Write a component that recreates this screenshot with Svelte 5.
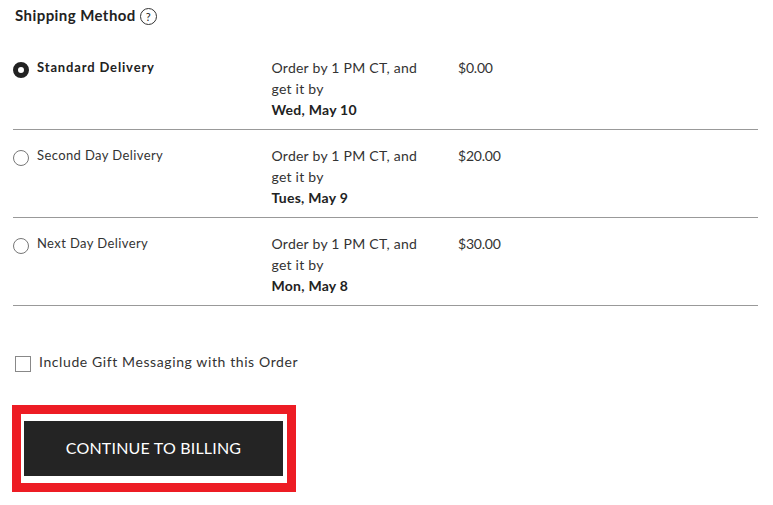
<script>
const methods = [
  { name: 'Standard Delivery', date: 'Wed, May 10', price: '$0.00', selected: true },
  { name: 'Second Day Delivery', date: 'Tues, May 9', price: '$20.00' },
  { name: 'Next Day Delivery', date: 'Mon, May 8', price: '$30.00' }
];
</script>

<div class="page">
  <h2 class="title">
    Shipping Method
    <span class="help">?</span>
  </h2>

  <div class="methods">
    {#each methods as m}
      <div class="method">
        <span class="radio" class:selected={m.selected}></span>
        <span class="name" class:strong={m.selected}>{m.name}</span>
        <div class="detail">
          Order by 1 PM CT, and<br />get it by<br /><b>{m.date}</b>
        </div>
        <div class="price">{m.price}</div>
      </div>
    {/each}
  </div>

  <label class="gift">
    <span class="box"></span>
    Include Gift Messaging with this Order
  </label>

  <div class="highlight">
    <button class="continue">CONTINUE TO BILLING</button>
  </div>
</div>

<style>
:global(body) {
  background: #fff;
}
.page {
  width: 773px;
  height: 505px;
  box-sizing: border-box;
  padding: 5px 15px 0 12px;
  font-family: Lato, "Liberation Sans", sans-serif;
  color: #333;
  overflow: hidden;
}
.title {
  margin: 0 0 0 3px;
  display: flex;
  align-items: center;
  gap: 4px;
  height: 20px;
  font-size: 15px;
  font-weight: 700;
  letter-spacing: 0.43px;
  color: #222;
}
.help {
  width: 17px;
  height: 17px;
  margin-top: 2px;
  box-sizing: border-box;
  border: 1px solid #333;
  border-radius: 50%;
  display: flex;
  align-items: center;
  justify-content: center;
  font-size: 11px;
  font-weight: 400;
  letter-spacing: 0;
}
.methods {
  margin-top: 17px;
  margin-left: 1px;
}
.method {
  height: 88px;
  box-sizing: border-box;
  border-bottom: 1px solid #999;
  padding-top: 15px;
  display: grid;
  grid-template-columns: 24px 234.5px 186.5px 1fr;
  align-items: start;
  font-size: 14px;
  line-height: 21px;
  letter-spacing: 0.25px;
}
.radio {
  width: 16px;
  height: 16px;
  margin-top: 5px;
  box-sizing: border-box;
  border: 1px solid #777;
  border-radius: 50%;
}
.radio.selected {
  border: 5px solid #222;
}
.name {
  font-size: 13px;
  line-height: 20px;
  letter-spacing: 0.4px;
}
.name.strong {
  font-weight: 700;
  letter-spacing: 0.85px;
  color: #222;
}
.price {
  letter-spacing: -0.2px;
}
.detail b {
  color: #222;
}
.gift {
  margin: 46px 0 0 3px;
  display: flex;
  align-items: flex-start;
  gap: 8px;
  font-size: 14px;
  line-height: 20px;
  letter-spacing: 0.6px;
}
.box {
  width: 16px;
  height: 16px;
  margin-top: 4px;
  box-sizing: border-box;
  border: 1px solid #888;
}
.highlight {
  margin-top: 33px;
  width: 284px;
  height: 87px;
  box-sizing: border-box;
  border: 9px solid #ed1c24;
  padding: 7px 4px 7px 3px;
}
.continue {
  display: block;
  width: 100%;
  height: 55px;
  padding-bottom: 3px;
  border: 0;
  background: #242424;
  color: #fff;
  font-family: inherit;
  font-size: 16px;
  letter-spacing: 0.2px;
}
</style>
